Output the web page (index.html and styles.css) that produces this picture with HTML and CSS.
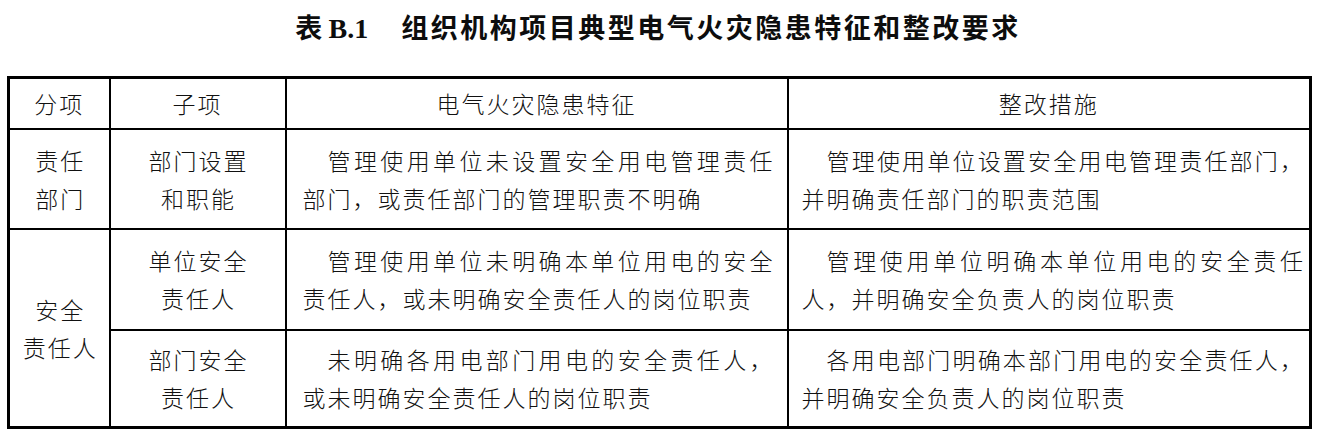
FILE: index.html
```html
<!DOCTYPE html>
<html lang="zh-CN">
<head>
<meta charset="utf-8">
<title>表 B.1 组织机构项目典型电气火灾隐患特征和整改要求</title>
<link rel="stylesheet" href="styles.css">
</head>
<body>
<div class="page">
  <h1 class="title"><span class="tnum">表 <b class="latin">B.1</b></span><span class="tname">组织机构项目典型电气火灾隐患特征和整改要求</span></h1>
  <table class="grid">
    <colgroup>
      <col class="c1"><col class="c2"><col class="c3"><col class="c4">
    </colgroup>
    <thead>
      <tr class="rh">
        <th>分项</th>
        <th>子项</th>
        <th>电气火灾隐患特征</th>
        <th>整改措施</th>
      </tr>
    </thead>
    <tbody>
      <tr class="r1">
        <td class="ctr">责任<br>部门</td>
        <td class="ctr">部门设置<br>和职能</td>
        <td class="txt t3">管理使用单位未设置安全用电管理责任部门，或责任部门的管理职责不明确</td>
        <td class="txt t4">管理使用单位设置安全用电管理责任部门，并明确责任部门的职责范围</td>
      </tr>
      <tr class="r2">
        <td class="ctr" rowspan="2">安全<br>责任人</td>
        <td class="ctr">单位安全<br>责任人</td>
        <td class="txt t3">管理使用单位未明确本单位用电的安全责任人，或未明确安全责任人的岗位职责</td>
        <td class="txt t4">管理使用单位明确本单位用电的安全责任人，并明确安全负责人的岗位职责</td>
      </tr>
      <tr class="r3">
        <td class="ctr">部门安全<br>责任人</td>
        <td class="txt t3">未明确各用电部门用电的安全责任人，或未明确安全责任人的岗位职责</td>
        <td class="txt t4">各用电部门明确本部门用电的安全责任人，并明确安全负责人的岗位职责</td>
      </tr>
    </tbody>
  </table>
</div>
</body>
</html>
```
FILE: styles.css
```css
html, body {
  margin: 0;
  padding: 0;
  background: #ffffff;
}

.page {
  width: 1324px;
  height: 443px;
  overflow: hidden;
  color: #111111;
  font-family: "Noto Sans CJK SC", "Noto Sans CJK JP", sans-serif;
}

.title {
  margin: 0 0 22px 0;
  height: 54px;
  line-height: 54px;
  text-align: center;
  font-size: 27px;
  font-weight: 700;
  color: #0d0d0d;
  padding-right: 8px;
}

.tnum {
  letter-spacing: 0;
}

.latin {
  font-family: "Liberation Serif", "Times New Roman", serif;
  font-weight: 700;
  font-size: 28px;
}

.tname {
  margin-left: 33px;
  letter-spacing: 2.5px;
}

.grid {
  margin-left: 7px;
  width: 1302px;
  table-layout: fixed;
  border-collapse: collapse;
  border: 3px solid #000000;
  font-size: 23px;
  font-weight: 300;
  letter-spacing: 2px;
  line-height: 38px;
}

.c1 { width: 101px; }
.c2 { width: 176px; }
.c3 { width: 502px; }
.c4 { width: 523px; }

.grid th,
.grid td {
  border: 2px solid #000000;
  padding: 0;
  vertical-align: middle;
}

.grid th {
  font-weight: 300;
  text-align: center;
}

.rh { height: 51px; }
.r1 { height: 100px; }
.r2 { height: 101px; }
.r3 { height: 98px; }

.grid .ctr {
  text-align: center;
  padding-left: 2px;
}

.grid .txt {
  text-align: justify;
  text-indent: 25px;
}

.grid .t3 {
  padding: 0 12px 0 16px;
}

.grid .t4 {
  padding: 0 4px 0 13px;
}
```
